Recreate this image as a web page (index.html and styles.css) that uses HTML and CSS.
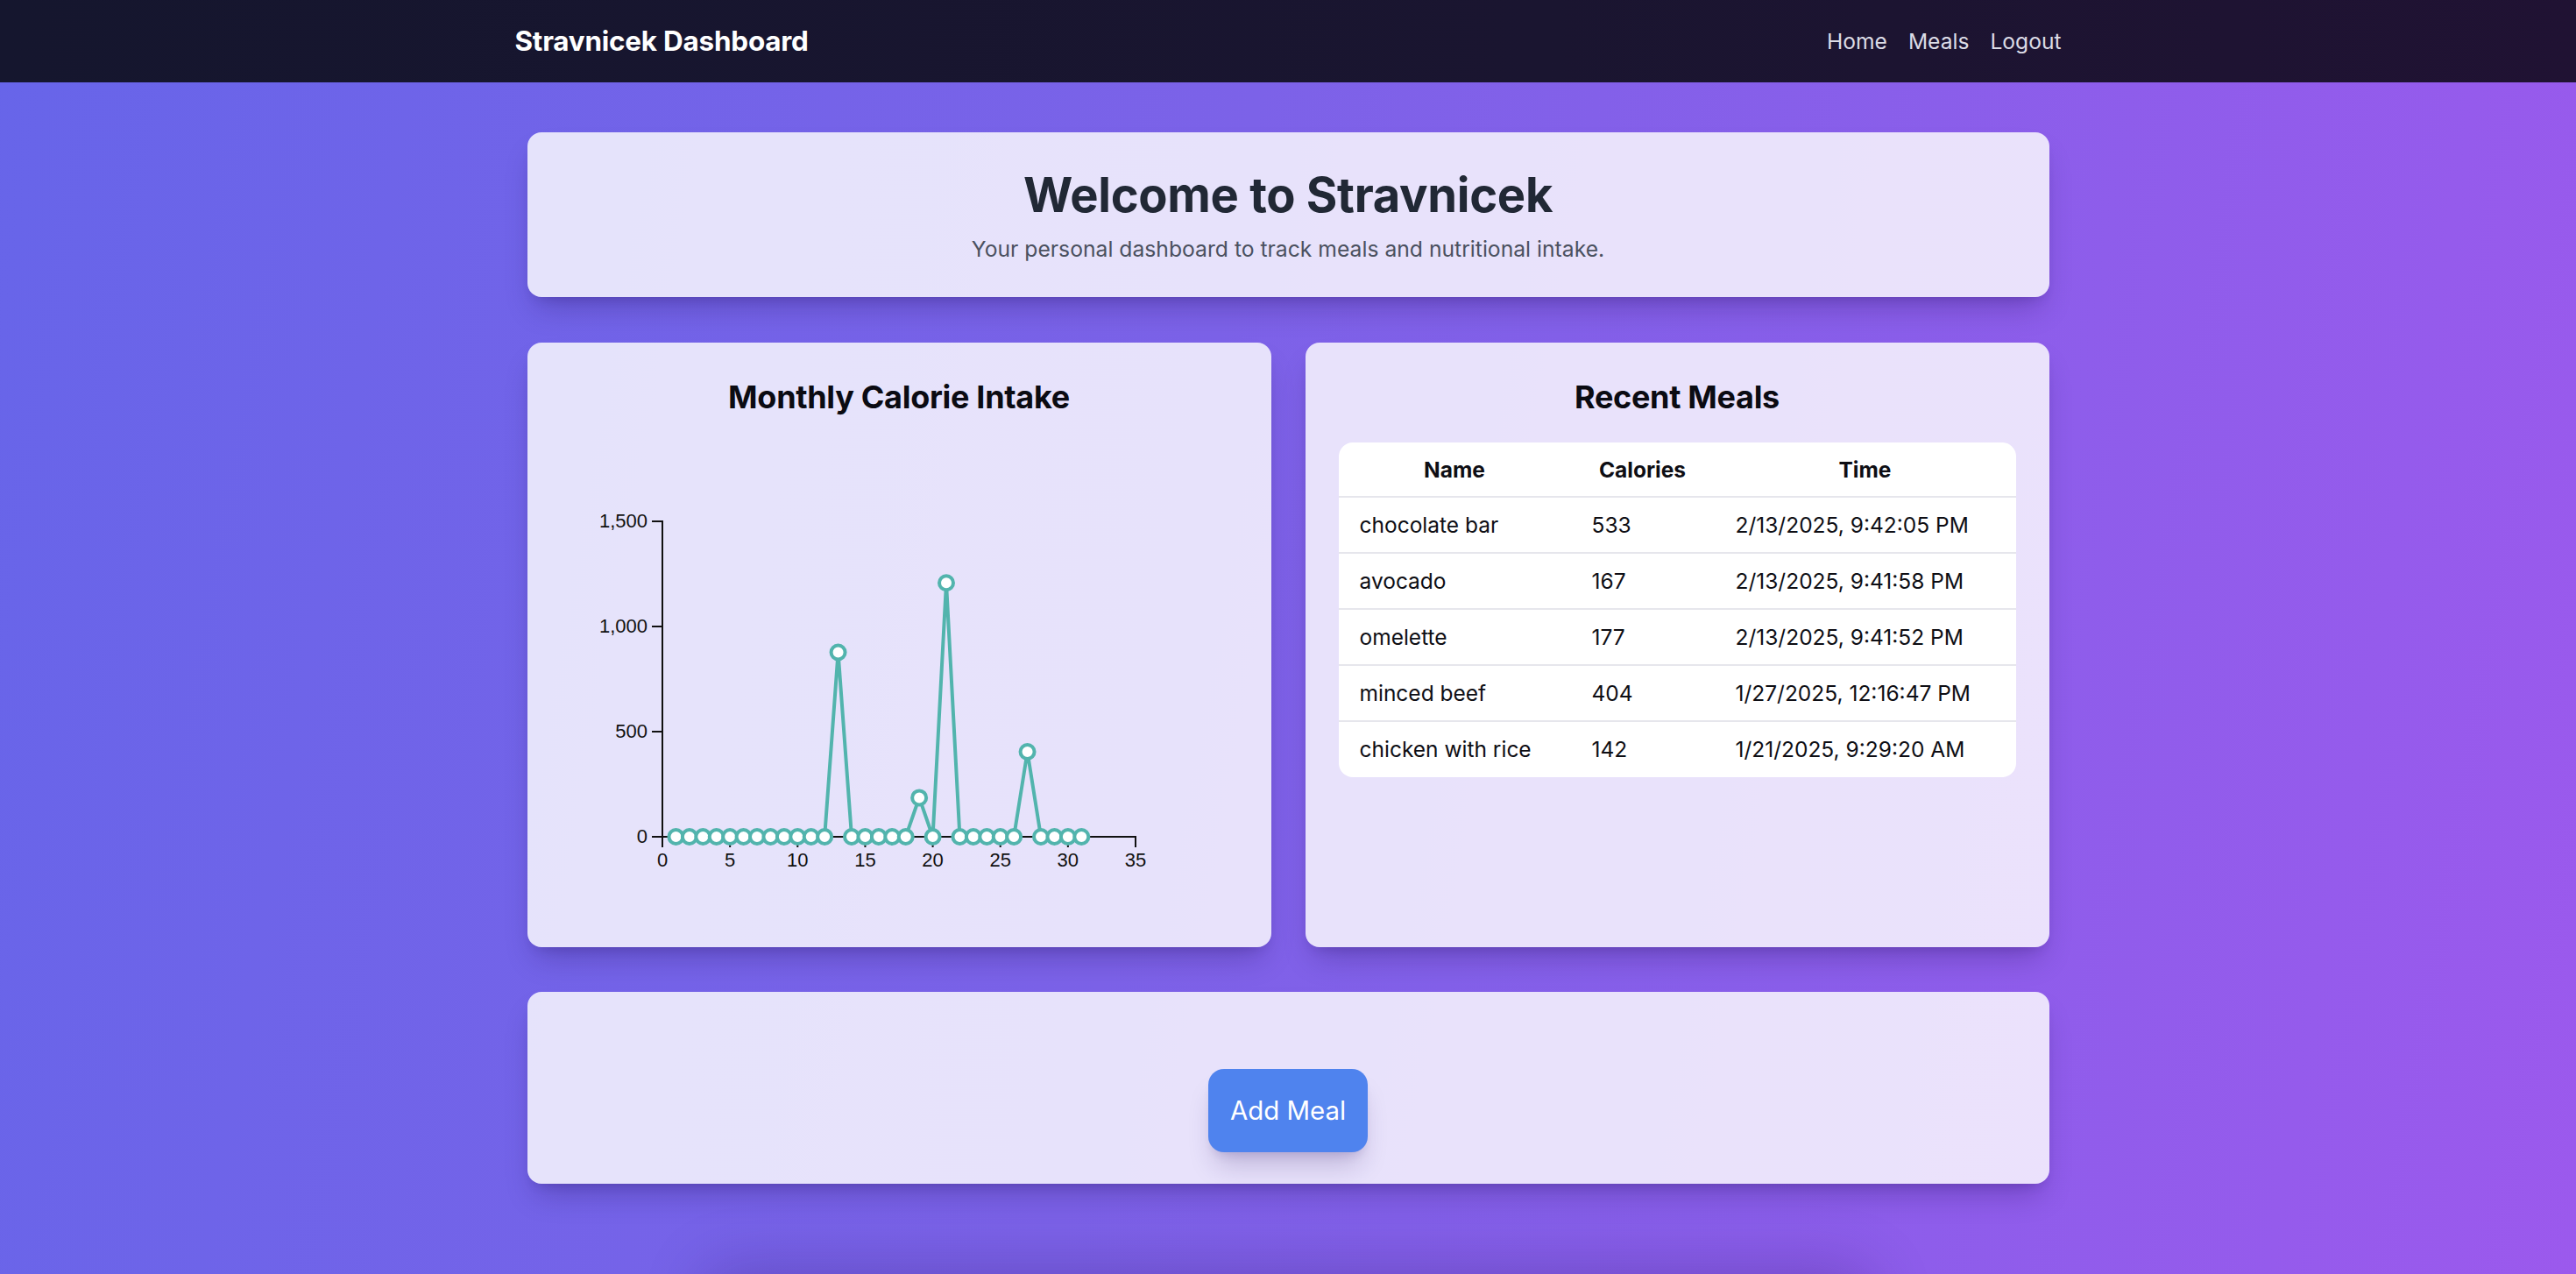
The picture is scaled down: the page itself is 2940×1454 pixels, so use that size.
FILE: index.html
```html
<!DOCTYPE html>
<html lang="en">
<head>
<meta charset="utf-8">
<title>Stravnicek Dashboard</title>
<link rel="stylesheet" href="styles.css">
</head>
<body>
<nav class="navbar">
  <div class="nav-inner">
    <span class="brand">Stravnicek Dashboard</span>
    <div class="nav-links">
      <a href="#">Home</a>
      <a href="#">Meals</a>
      <a href="#">Logout</a>
    </div>
  </div>
</nav>
<main class="main">
  <section class="card welcome">
    <h1 class="welcome-title">Welcome to Stravnicek</h1>
    <p class="welcome-sub">Your personal dashboard to track meals and nutritional intake.</p>
  </section>

  <div class="grid">
    <section class="card panel">
      <h2 class="panel-title">Monthly Calorie Intake</h2>
      <svg class="chart" width="773" height="536" viewBox="0 0 773 536">
        <g class="axis">
          <path class="domain" d="M104,90 H116 V450 H104"/>
          <path class="domain" d="M116,462 V450 H656 V462"/>
          <line x1="104" y1="330" x2="116" y2="330"/>
          <line x1="104" y1="210" x2="116" y2="210"/>
          <line x1="193.14" y1="450" x2="193.14" y2="462"/>
          <line x1="270.29" y1="450" x2="270.29" y2="462"/>
          <line x1="347.43" y1="450" x2="347.43" y2="462"/>
          <line x1="424.57" y1="450" x2="424.57" y2="462"/>
          <line x1="501.71" y1="450" x2="501.71" y2="462"/>
          <line x1="578.86" y1="450" x2="578.86" y2="462"/>
        </g>
        <g class="ylabels">
          <text x="99" y="457">0</text>
          <text x="99" y="337">500</text>
          <text x="99" y="217">1,000</text>
          <text x="99" y="97">1,500</text>
        </g>
        <g class="xlabels">
          <text x="116" y="484">0</text>
          <text x="193.14" y="484">5</text>
          <text x="270.29" y="484">10</text>
          <text x="347.43" y="484">15</text>
          <text x="424.57" y="484">20</text>
          <text x="501.71" y="484">25</text>
          <text x="578.86" y="484">30</text>
          <text x="656" y="484">35</text>
        </g>
        <polyline class="series" points="131.43,450 146.86,450 162.29,450 177.71,450 193.14,450 208.57,450 224,450 239.43,450 254.86,450 270.29,450 285.71,450 301.14,450 316.57,239.5 332,450 347.43,450 362.86,450 378.29,450 393.71,450 409.14,405.4 424.57,450 440,160.3 455.43,450 470.86,450 486.29,450 501.71,450 517.14,450 532.57,353 548,450 563.43,450 578.86,450 594.29,450"/>
        <g class="dots">
          <circle cx="131.43" cy="450" r="8"/>
          <circle cx="146.86" cy="450" r="8"/>
          <circle cx="162.29" cy="450" r="8"/>
          <circle cx="177.71" cy="450" r="8"/>
          <circle cx="193.14" cy="450" r="8"/>
          <circle cx="208.57" cy="450" r="8"/>
          <circle cx="224" cy="450" r="8"/>
          <circle cx="239.43" cy="450" r="8"/>
          <circle cx="254.86" cy="450" r="8"/>
          <circle cx="270.29" cy="450" r="8"/>
          <circle cx="285.71" cy="450" r="8"/>
          <circle cx="301.14" cy="450" r="8"/>
          <circle cx="316.57" cy="239.5" r="8"/>
          <circle cx="332" cy="450" r="8"/>
          <circle cx="347.43" cy="450" r="8"/>
          <circle cx="362.86" cy="450" r="8"/>
          <circle cx="378.29" cy="450" r="8"/>
          <circle cx="393.71" cy="450" r="8"/>
          <circle cx="409.14" cy="405.4" r="8"/>
          <circle cx="424.57" cy="450" r="8"/>
          <circle cx="440" cy="160.3" r="8"/>
          <circle cx="455.43" cy="450" r="8"/>
          <circle cx="470.86" cy="450" r="8"/>
          <circle cx="486.29" cy="450" r="8"/>
          <circle cx="501.71" cy="450" r="8"/>
          <circle cx="517.14" cy="450" r="8"/>
          <circle cx="532.57" cy="353" r="8"/>
          <circle cx="548" cy="450" r="8"/>
          <circle cx="563.43" cy="450" r="8"/>
          <circle cx="578.86" cy="450" r="8"/>
          <circle cx="594.29" cy="450" r="8"/>
        </g>
      </svg>
    </section>

    <section class="card panel">
      <h2 class="panel-title">Recent Meals</h2>
      <table class="meals">
        <colgroup>
          <col class="col-name">
          <col class="col-cal">
          <col class="col-time">
        </colgroup>
        <thead>
          <tr><th>Name</th><th>Calories</th><th>Time</th></tr>
        </thead>
        <tbody>
          <tr><td>chocolate bar</td><td>533</td><td>2/13/2025, 9:42:05 PM</td></tr>
          <tr><td>avocado</td><td>167</td><td>2/13/2025, 9:41:58 PM</td></tr>
          <tr><td>omelette</td><td>177</td><td>2/13/2025, 9:41:52 PM</td></tr>
          <tr><td>minced beef</td><td>404</td><td>1/27/2025, 12:16:47 PM</td></tr>
          <tr><td>chicken with rice</td><td>142</td><td>1/21/2025, 9:29:20 AM</td></tr>
        </tbody>
      </table>
    </section>
  </div>

  <section class="card add-card">
    <button class="add-btn" type="button">Add Meal</button>
  </section>

  <div class="below-fold"></div>
</main>
</body>
</html>
```
FILE: styles.css
```css
* { box-sizing: border-box; }

html { overflow: hidden; }

body {
  margin: 0;
  min-height: 100vh;
  font-family: Inter, "Noto Sans", "Liberation Sans", sans-serif;
  background: linear-gradient(100deg, #6765e9 0%, #7c62e8 45%, #9c59ed 100%);
  color: #111;
}

.navbar {
  height: 94px;
  background: linear-gradient(90deg, #15162e 0%, #1a1530 60%, #201233 100%);
  display: flex;
  align-items: center;
}

.nav-inner {
  width: 1765px;
  margin: 0 auto;
  display: flex;
  justify-content: space-between;
  align-items: center;
}

.brand {
  color: #fff;
  font-weight: 700;
  font-size: 31.4px;
  letter-spacing: -0.2px;
}

.nav-links {
  display: flex;
  gap: 24px;
}

.nav-links a {
  color: #dcdce6;
  text-decoration: none;
  font-size: 24.6px;
}

.main {
  width: 1737px;
  margin: 57px auto 0;
}

.card {
  background: rgba(255, 255, 255, 0.82);
  border-radius: 16px;
  box-shadow: 0 20px 34px -10px rgba(30, 10, 80, 0.28), 0 8px 14px -8px rgba(30, 10, 80, 0.2);
}

.welcome {
  padding: 39px 40px 36px;
  text-align: center;
}

.welcome-title {
  margin: 0 0 10px;
  font-size: 54.3px;
  line-height: 65px;
  font-weight: 700;
  color: #212835;
  letter-spacing: -0.3px;
}

.welcome-sub {
  margin: 0;
  font-size: 24.7px;
  line-height: 38px;
  color: #4b5160;
}

.grid {
  display: grid;
  grid-template-columns: 1fr 1fr;
  gap: 39px;
  margin-top: 52px;
}

.panel {
  padding: 40px 38px;
}

.panel-title {
  margin: 0 0 30px;
  text-align: center;
  font-size: 36px;
  line-height: 44px;
  font-weight: 700;
  color: #0b0b12;
  letter-spacing: -0.3px;
}

.chart {
  display: block;
}

.axis path, .axis line {
  fill: none;
  stroke: #111;
  stroke-width: 2;
}

.ylabels text, .xlabels text {
  font-family: "Liberation Sans", Arial, sans-serif;
  font-size: 22px;
  fill: #111;
}

.ylabels text { text-anchor: end; }
.xlabels text { text-anchor: middle; }

.series {
  fill: none;
  stroke: #52b4ad;
  stroke-width: 4;
  stroke-linejoin: miter;
}

.dots circle {
  fill: #fff;
  stroke: #52b4ad;
  stroke-width: 4;
}

.meals {
  width: 100%;
  border-collapse: collapse;
  background: #fff;
  border-radius: 16px;
  overflow: hidden;
  font-size: 24.5px;
  color: #0e0e14;
}

.col-name { width: 265px; }
.col-cal { width: 164px; }

.meals th {
  font-weight: 700;
  text-align: center;
  padding: 13px 24px 12px;
  line-height: 36px;
  border-bottom: 2px solid #e6e6ec;
}

.meals td {
  text-align: left;
  padding: 13px 24px;
  line-height: 36px;
  border-bottom: 2px solid #e6e6ec;
}

.meals tbody tr:last-child td {
  border-bottom: none;
  padding-bottom: 14px;
}

.add-card {
  margin-top: 51px;
  padding: 88px 40px 36px;
  display: flex;
  justify-content: center;
}

.add-btn {
  font-family: inherit;
  font-size: 29.4px;
  line-height: 47px;
  color: #fff;
  background: #4f83ee;
  border: none;
  border-radius: 18px;
  padding: 24px 25px;
  box-shadow: 0 22px 30px -8px rgba(40, 20, 100, 0.22), 0 8px 12px -6px rgba(40, 20, 100, 0.15);
  cursor: pointer;
}

.below-fold {
  width: 1300px;
  height: 200px;
  margin: 112px auto 0;
  border-radius: 16px;
  box-shadow: 0 0 70px 14px rgba(40, 10, 90, 0.26);
}
```
